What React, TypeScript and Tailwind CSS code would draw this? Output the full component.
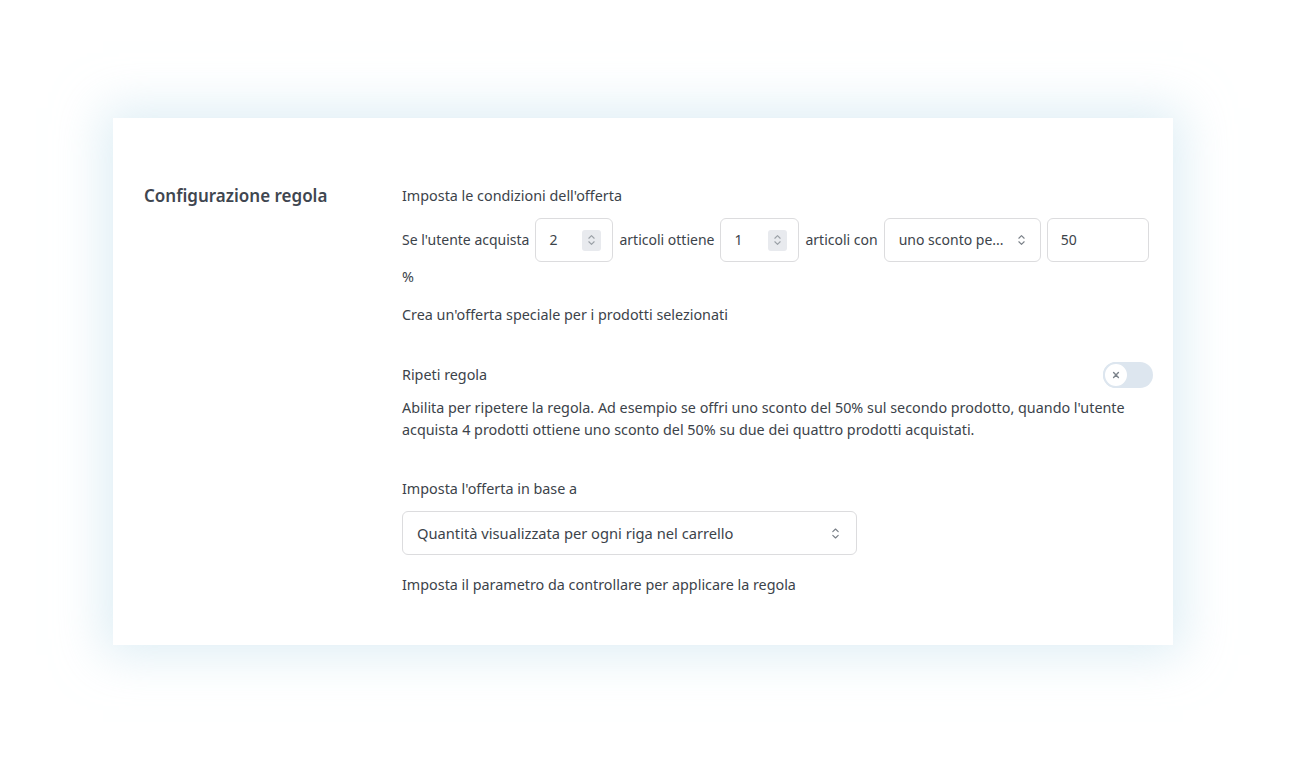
import React from "react";

function UpDown({ className = "" }: { className?: string }) {
  return (
    <svg viewBox="0 0 10 16" className={className} fill="none" stroke="currentColor" strokeWidth="1.3" strokeLinecap="round" strokeLinejoin="round">
      <path d="M2 6l3-3 3 3" />
      <path d="M2 10l3 3 3-3" />
    </svg>
  );
}

function NumberInput({ value, width }: { value: string; width: string }) {
  return (
    <div className={`flex h-[44px] ${width} shrink-0 items-center justify-between rounded-[6px] border border-[#dcdcde] bg-white pl-[13px] pr-[11px]`}>
      <span>{value}</span>
      <span className="flex h-[21px] w-[19px] items-center justify-center rounded-[3px] bg-[#e8eaee] text-[#9aa0a6]">
        <UpDown className="h-[14px] w-[9px]" />
      </span>
    </div>
  );
}

export default function App() {
  return (
    <div className="min-h-[757px] w-full bg-white pt-[118px] text-[14.35px] leading-[22px] text-[#3c434a]" style={{ fontFamily: '"Noto Sans", "Open Sans", sans-serif' }}>
      <div className="mx-[113px] flex w-[1060px] bg-white pb-[49px] pl-[31px] pr-[20px] pt-[67px] shadow-[0_0_45px_10px_rgba(200,226,238,0.6)]">
        <div className="w-[258px] shrink-0">
          <h2 className="text-[17px] font-semibold leading-[22px] text-[#3f4650]">Configurazione regola</h2>
        </div>
        <div className="min-w-0 flex-1">
          <div>Imposta le condizioni dell'offerta</div>
          <div className="mt-[11px] flex items-center gap-[6px] whitespace-nowrap text-[14px]">
            <span className="shrink-0">Se l'utente acquista</span>
            <NumberInput value="2" width="w-[78px]" />
            <span className="shrink-0">articoli ottiene</span>
            <NumberInput value="1" width="w-[79px]" />
            <span className="shrink-0">articoli con</span>
            <div className="flex h-[44px] w-[157px] shrink-0 items-center justify-between rounded-[6px] border border-[#dcdcde] bg-white pl-[14px] pr-[14px]">
              <span>uno sconto pe...</span>
              <UpDown className="h-[14px] w-[9px] text-[#7a8088]" />
            </div>
            <div className="flex h-[44px] w-[102px] shrink-0 items-center rounded-[6px] border border-[#dcdcde] bg-white pl-[13px]">
              <span>50</span>
            </div>
          </div>
          <div className="mt-[4px]">%</div>
          <div className="mt-[16px]">Crea un'offerta speciale per i prodotti selezionati</div>

          <div className="mt-[36px] flex h-[26px] items-center justify-between">
            <span>Ripeti regola</span>
            <div className="flex h-[26px] w-[50px] items-center rounded-full bg-[#dde6ef]">
              <span className="flex h-[26px] w-[26px] items-center justify-center rounded-full border-2 border-[#dde6ef] bg-white text-[#7d848c]">
                <svg viewBox="0 0 10 10" className="h-[8px] w-[8px]" stroke="currentColor" strokeWidth="1.8" strokeLinecap="round">
                  <path d="M2 2l6 6M8 2l-6 6" />
                </svg>
              </span>
            </div>
          </div>
          <p className="mt-[9px] w-[745px]">
            Abilita per ripetere la regola. Ad esempio se offri uno sconto del 50% sul secondo prodotto, quando l'utente acquista 4 prodotti ottiene uno sconto del 50% su due dei quattro prodotti acquistati.
          </p>

          <div className="mt-[37px]">Imposta l'offerta in base a</div>
          <div className="mt-[11px] flex h-[44px] w-[455px] items-center justify-between rounded-[6px] border border-[#dcdcde] bg-white pl-[14px] pr-[16px] text-[14.7px]">
            <span>Quantità visualizzata per ogni riga nel carrello</span>
            <UpDown className="h-[15px] w-[9px] text-[#7a8088]" />
          </div>
          <div className="mt-[19px]">Imposta il parametro da controllare per applicare la regola</div>
        </div>
      </div>
    </div>
  );
}
